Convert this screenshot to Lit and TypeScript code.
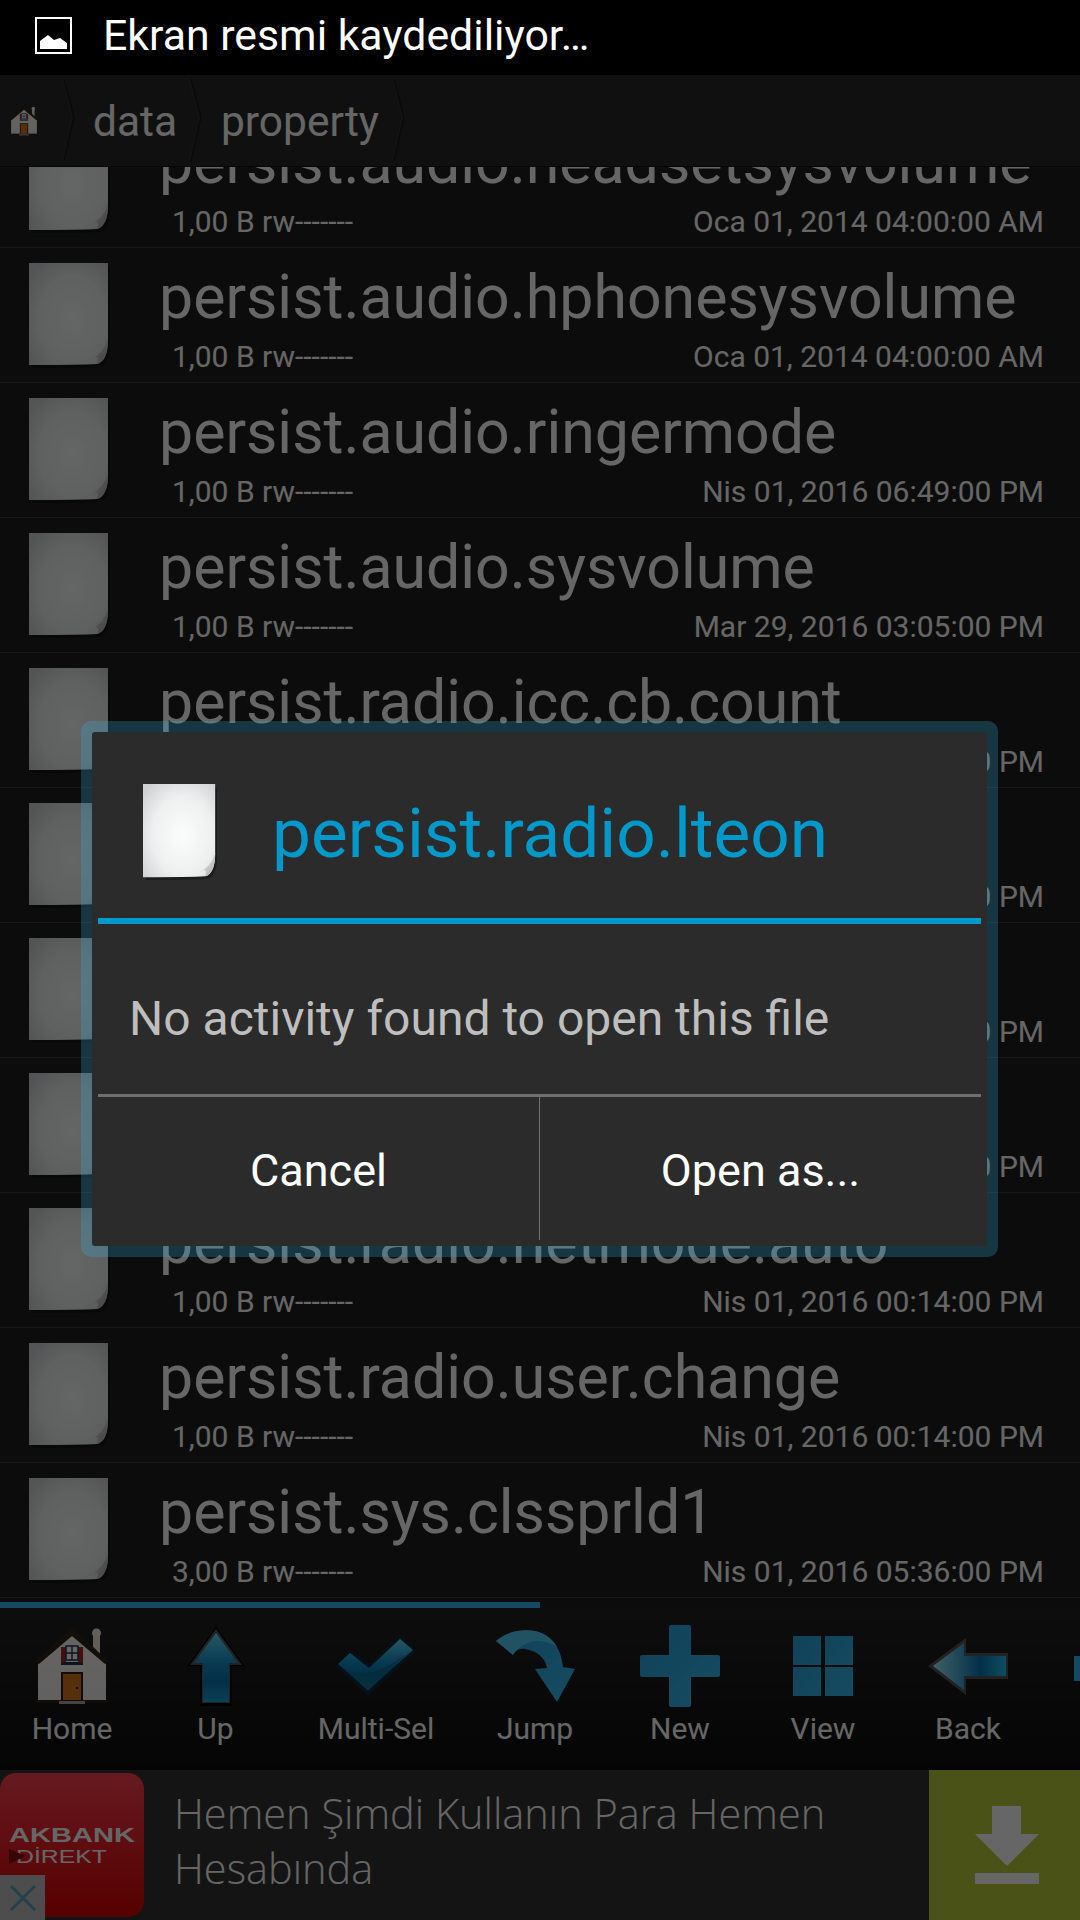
import { LitElement, html, css, svg } from 'lit';
import { customElement } from 'lit/decorators.js';

const LATE = 'Nis 01, 2016 00:14:00 PM';
const rows = [
  ['persist.audio.headsetsysvolume', '1,00 B rw-------', 'Oca 01, 2014 04:00:00 AM'],
  ['persist.audio.hphonesysvolume', '1,00 B rw-------', 'Oca 01, 2014 04:00:00 AM'],
  ['persist.audio.ringermode', '1,00 B rw-------', 'Nis 01, 2016 06:49:00 PM'],
  ['persist.audio.sysvolume', '1,00 B rw-------', 'Mar 29, 2016 03:05:00 PM'],
  ['persist.radio.icc.cb.count', '1,00 B rw-------', LATE],
  ['persist.radio.ia', '1,00 B rw-------', LATE],
  ['persist.radio.lteon', '1,00 B rw-------', LATE],
  ['persist.radio.mode', '1,00 B rw-------', LATE],
  ['persist.radio.netmode.auto', '1,00 B rw-------', LATE],
  ['persist.radio.user.change', '1,00 B rw-------', LATE],
  ['persist.sys.clssprld1', '3,00 B rw-------', 'Nis 01, 2016 05:36:00 PM'],
];

const gradients = html`<svg class="defs" width="0" height="0">
  <defs>
    <radialGradient id="paper" cx="0.55" cy="0.55" r="0.7">
      <stop offset="0" stop-color="#fbfdfd" />
      <stop offset="0.6" stop-color="#eef0f0" />
      <stop offset="1" stop-color="#cfd1d3" />
    </radialGradient>
    <linearGradient id="curl" x1="0" y1="0" x2="1" y2="1">
      <stop offset="0" stop-color="#f4f4f4" />
      <stop offset="1" stop-color="#a9a9a9" />
    </linearGradient>
    <linearGradient id="blueV" x1="0" y1="0" x2="0" y2="1">
      <stop offset="0" stop-color="#60ddff" />
      <stop offset="0.45" stop-color="#1590c8" />
      <stop offset="0.7" stop-color="#0a78b0" />
      <stop offset="1" stop-color="#1a9fd8" />
    </linearGradient>
    <linearGradient id="blueFlat" x1="0" y1="0" x2="1" y2="1">
      <stop offset="0" stop-color="#2aa5dd" />
      <stop offset="1" stop-color="#35bcf0" />
    </linearGradient>
    <linearGradient id="blueH" x1="0" y1="0" x2="1" y2="0">
      <stop offset="0" stop-color="#a0f0ff" />
      <stop offset="0.65" stop-color="#0878b8" />
      <stop offset="1" stop-color="#28c0f0" />
    </linearGradient>
    <linearGradient id="wall" x1="0" y1="0" x2="0" y2="1">
      <stop offset="0" stop-color="#fffcf4" />
      <stop offset="1" stop-color="#f2f2f2" />
    </linearGradient>
  </defs>
</svg>`;

const paperIcon = (w: number, h: number) => html`<svg class="paper" width=${w} height=${h} viewBox="0 0 81 105">
  <path d="M3 4H81V80Q81 101 70 104Q56 105 3 105Z" fill="#000" opacity="0.35" />
  <path d="M0 0H79V76Q79 98 68 101Q52 102 0 102Z" fill="url(#paper)" />
  <path d="M79 76Q79 98 68 101Q72 90 60 97Q74 92 79 76Z" fill="url(#curl)" />
</svg>`;

const houseIcon = (w: number, h: number) => html`<svg width=${w} height=${h} viewBox="0 0 74 80">
  <path d="M58 8h7v24h-7z" fill="#efe9dd" />
  <circle cx="61.5" cy="7" r="4.5" fill="#f4efe6" />
  <path d="M3 34L37 6L71 34V74H3Z" fill="url(#wall)" />
  <path d="M0 36L37 1L74 36L70 38L37 10L4 38Z" fill="#2e2418" />
  <path d="M26 21h5v15h-5zM43 21h5v15h-5z" fill="#b2282a" />
  <path d="M31 20h12v14H31z" fill="#fff" stroke="#20324e" stroke-width="1.4" />
  <path d="M37 20v14M31 27h12" stroke="#20324e" stroke-width="1.4" />
  <path d="M26 36h22v3H26z" fill="#20324e" />
  <path d="M26 46h22v29H26z" fill="#2c2015" />
  <path d="M28 48h18v27H28z" fill="#d7751c" />
  <circle cx="42" cy="62" r="1.2" fill="#222" />
  <path d="M1 74h72v3H1z" fill="#2c2418" />
  <path d="M24 75h26v3H24z" fill="#aaa" />
</svg>`;

const upIcon = svg`<path d="M28 0L56 40H44V80H12V40H0Z" fill="#000" opacity="0.8" />
  <path d="M28 3L54 39H42V77H14V39H2Z" fill="#8a8a8a" opacity="0.6" />
  <path d="M28 7L50 37H41V76H15V37H6Z" fill="url(#blueV)" />`;

const checkIcon = svg`<path d="M0 30L14 14L33 29L64 0L80 15L32 60Z" fill="#0b2c3d" />
  <path d="M2 28L14 17L33 32L64 3L77 14L32 54Z" fill="url(#blueV)" />
  <path d="M4 29Q30 50 74 15L32 55Z" fill="#0d6a94" opacity="0.7" />`;

const jumpIcon = svg`<path d="M1 12C12 2 28 0 40 2C56 6 66 18 68 38L80 40L62 73L40 40L52 39C50 28 42 22 30 20C24 19 20 22 18 26Z" fill="url(#blueFlat)" />
  <path d="M1 12C12 2 28 0 40 2C50 4 58 10 62 18C50 10 30 8 18 26Z" fill="#60ddff" opacity="0.7" />`;

const plusIcon = svg`<path d="M29 2a2 2 0 0 1 2-2h18a2 2 0 0 1 2 2v28h27a2 2 0 0 1 2 2v18a2 2 0 0 1-2 2H51v28a2 2 0 0 1-2 2H31a2 2 0 0 1-2-2V52H2a2 2 0 0 1-2-2V32a2 2 0 0 1 2-2h27Z" fill="url(#blueFlat)" />`;

const viewIcon = svg`<path d="M0 0h28v29H0zM32 0h28v29H32zM0 31h28v29H0zM32 31h28v29H32z" fill="url(#blueFlat)" />`;

const backIcon = svg`<path d="M0 28L38 0V15H80V41H38V57Z" fill="#555" />
  <path d="M5 28L36 5V18H78V38H36V52Z" fill="url(#blueH)" />`;

const tools = [
  { label: 'Home', icon: houseIcon(74, 80) },
  { label: 'Up', icon: html`<svg width="56" height="80" viewBox="0 0 56 80">${upIcon}</svg>` },
  { label: 'Multi-Sel', icon: html`<svg width="80" height="60" viewBox="0 0 80 60">${checkIcon}</svg>` },
  { label: 'Jump', icon: html`<svg width="81" height="75" viewBox="0 0 81 75">${jumpIcon}</svg>` },
  { label: 'New', icon: html`<svg width="80" height="82" viewBox="0 0 80 82">${plusIcon}</svg>` },
  { label: 'View', icon: html`<svg width="60" height="60" viewBox="0 0 60 60">${viewIcon}</svg>` },
  { label: 'Back', icon: html`<svg width="80" height="57" viewBox="0 0 80 57">${backIcon}</svg>` },
];

@customElement('app-root')
export class AppRoot extends LitElement {
  static styles = css`
    :host {
      display: block;
      width: 1080px;
      height: 1920px;
      font-family: 'Roboto', 'Liberation Sans', sans-serif;
    }

    .defs {
      position: absolute;
    }

    .page {
      position: relative;
      display: flex;
      flex-direction: column;
      width: 1080px;
      height: 1920px;
      overflow: hidden;
      background: #1f1f1f;
    }

    .status {
      display: flex;
      align-items: center;
      gap: 31px;
      height: 75px;
      box-sizing: border-box;
      padding: 0 0 5px 35px;
      background: #000;
      color: #fff;
      font-size: 42.8px;
      flex: none;
    }

    .crumbs {
      display: flex;
      align-items: center;
      height: 91px;
      background: #2a2a2a;
      border-bottom: 1px solid #111;
      color: #fff;
      font-size: 42.5px;
      flex: none;
    }

    .crumb {
      display: flex;
      align-items: center;
      height: 100%;
    }

    .crumb-home {
      padding-left: 10px;
      width: 52px;
    }

    .crumb-data {
      margin-left: 17px;
      padding-top: 2px;
      width: 96px;
    }

    .crumb-property {
      margin-left: 18px;
      padding-top: 2px;
      width: 171px;
    }

    .chevron {
      flex: none;
    }

    .list {
      flex: 1;
      min-height: 0;
      overflow: hidden;
    }

    .rows {
      margin-top: -54px;
    }

    .row {
      display: flex;
      height: 135px;
      box-sizing: border-box;
      padding: 15px 36px 0 29px;
      border-bottom: 1px solid #3a3a3a;
      color: #fff;
    }

    .paper {
      flex: none;
    }

    .row-text {
      flex: 1;
      margin-left: 49px;
      min-width: 0;
    }

    .name {
      margin-top: 2px;
      font-size: 60.8px;
      line-height: 66px;
      white-space: nowrap;
    }

    .meta {
      display: flex;
      justify-content: space-between;
      margin-top: 8px;
      padding-left: 13px;
      font-size: 30px;
      line-height: 36px;
    }

    .progress {
      flex: none;
      height: 6px;
      background: #1f1f1f;
    }

    .progress-fill {
      width: 540px;
      height: 100%;
      background: #35bcf0;
    }

    .toolbar {
      flex: none;
      display: grid;
      grid-template-columns: 144px 143px 178px 140px 150px 136px 154px 1fr;
      height: 158px;
      box-sizing: border-box;
      padding-top: 17px;
      background: linear-gradient(#222, #0e0e0e);
      color: #fff;
      font-size: 30px;
    }

    .tool {
      display: flex;
      flex-direction: column;
      align-items: center;
    }

    .tool-icon {
      display: flex;
      align-items: center;
      justify-content: center;
      height: 82px;
    }

    .tool-label {
      margin-top: 4px;
      line-height: 36px;
    }

    .tool-next {
      margin: 31px 0 0 29px;
      width: 10px;
      height: 25px;
      background: #30b8f0;
    }

    .ad {
      position: relative;
      flex: none;
      display: flex;
      height: 154px;
      box-sizing: border-box;
      border-top: 4px solid #0a0a0a;
      background: #343434;
      color: #fff;
    }

    .ad-logo {
      flex: none;
      width: 144px;
      height: 144px;
      margin-top: 3px;
      border-radius: 16px;
      background: linear-gradient(#ff4150, #d70000);
    }

    .ad-text {
      flex: 1;
      margin-left: 30px;
      padding-top: 16px;
      font-family: 'Open Sans', 'Noto Sans', sans-serif;
      font-weight: 300;
      font-size: 41.5px;
      line-height: 55px;
    }

    .ad-install {
      flex: none;
      display: flex;
      align-items: center;
      justify-content: center;
      width: 151px;
      box-sizing: border-box;
      padding-left: 5px;
      background: #bccd3d;
    }

    .ad-close {
      position: absolute;
      left: 0;
      bottom: 0;
      display: flex;
      align-items: center;
      justify-content: center;
      width: 45px;
      height: 45px;
      background: #c4c0c0;
    }

    .dim {
      position: absolute;
      left: 0;
      right: 0;
      top: 75px;
      bottom: 0;
      background: rgba(0, 0, 0, 0.6);
    }

    .dialog {
      position: absolute;
      left: 81px;
      top: 721px;
      box-sizing: border-box;
      width: 917px;
      height: 536px;
      padding: 11px;
      border-radius: 10px;
      background: rgba(51, 181, 229, 0.25);
    }

    .dialog-inner {
      display: flex;
      flex-direction: column;
      height: 100%;
      border-radius: 3px;
      background: #2b2b2b;
    }

    .dialog-head {
      display: flex;
      align-items: center;
      gap: 55px;
      height: 186px;
      box-sizing: border-box;
      padding: 14px 0 0 51px;
      flex: none;
      color: #0099cc;
      font-size: 69.3px;
    }

    .dialog-title {
      margin-top: 2px;
    }

    .rule-blue {
      flex: none;
      height: 6px;
      margin: 0 6px;
      background: #0099cc;
    }

    .dialog-msg {
      flex: 1;
      display: flex;
      align-items: center;
      padding: 18px 0 0 37px;
      color: #bebebe;
      font-size: 48px;
    }

    .rule-grey {
      flex: none;
      height: 3px;
      margin: 0 6px;
      background: #6f6f6f;
    }

    .dialog-buttons {
      flex: none;
      display: grid;
      grid-template-columns: 441px 1fr;
      height: 143px;
      margin: 0 6px 6px;
      color: #fff;
      font-size: 45px;
    }

    .dialog-btn {
      display: flex;
      align-items: center;
      justify-content: center;
      padding-top: 4px;
    }

    .dialog-btn + .dialog-btn {
      border-left: 1px solid #6f6f6f;
    }
  `;

  chevron() {
    return html`<svg class="chevron" width="14" height="91" viewBox="0 0 14 91">
      <path d="M2 4L12 42L2 86" fill="none" stroke="#1a1a1a" stroke-width="1.5" />
      <path d="M0 4L10 42L0 86" fill="none" stroke="#333" stroke-width="1" />
    </svg>`;
  }

  render() {
    return html`
      ${gradients}
      <div class="page">
        <div class="status">
          <svg width="37" height="37" viewBox="0 0 37 37">
            <path d="M1 1h35v35H1z" fill="none" stroke="#fff" stroke-width="2" />
            <path d="M5 32V24L13 18L19 23L25 21L32 26V32Z" fill="#fff" />
          </svg>
          <span>Ekran resmi kaydediliyor…</span>
        </div>

        <div class="crumbs">
          <div class="crumb crumb-home">${houseIcon(28, 32)}</div>
          ${this.chevron()}
          <div class="crumb crumb-data"><span>data</span></div>
          ${this.chevron()}
          <div class="crumb crumb-property"><span>property</span></div>
          ${this.chevron()}
        </div>

        <div class="list">
          <div class="rows">
            ${rows.map(
              ([name, size, date]) => html`<div class="row">
                ${paperIcon(81, 105)}
                <div class="row-text">
                  <div class="name">${name}</div>
                  <div class="meta"><span>${size}</span><span>${date}</span></div>
                </div>
              </div>`
            )}
          </div>
        </div>

        <div class="progress"><div class="progress-fill"></div></div>

        <div class="toolbar">
          ${tools.map(
            (tool) => html`<div class="tool">
              <div class="tool-icon">${tool.icon}</div>
              <div class="tool-label">${tool.label}</div>
            </div>`
          )}
          <div class="tool-next"></div>
        </div>

        <div class="ad">
          <div class="ad-logo">
            <svg width="144" height="144" viewBox="0 0 144 144">
              <text x="9" y="69" font-family="Liberation Sans" font-weight="700" font-size="20" fill="#fff" textLength="126" lengthAdjust="spacingAndGlyphs">AKBANK</text>
              <text x="16" y="90" font-family="Liberation Sans" font-size="19" fill="#fff" textLength="91" lengthAdjust="spacingAndGlyphs">DİREKT</text>
              <path d="M9 76L26 83L9 91Z" fill="#8f0a0a" />
            </svg>
          </div>
          <div class="ad-text">Hemen Şimdi Kullanın Para Hemen Hesabında</div>
          <div class="ad-install">
            <svg width="64" height="78" viewBox="0 0 64 78">
              <path d="M17 0H46V28H64L32 60L0 28H17ZM0 67H64V78H0Z" fill="#fff" />
            </svg>
          </div>
          <div class="ad-close">
            <svg width="30" height="30" viewBox="0 0 30 30">
              <path d="M3 3L27 27M27 3L3 27" stroke="#5aa0be" stroke-width="3" fill="none" />
            </svg>
          </div>
        </div>

        <div class="dim"></div>

        <div class="dialog">
          <div class="dialog-inner">
            <div class="dialog-head">
              ${paperIcon(74, 96)}
              <span class="dialog-title">persist.radio.lteon</span>
            </div>
            <div class="rule-blue"></div>
            <div class="dialog-msg">No activity found to open this file</div>
            <div class="rule-grey"></div>
            <div class="dialog-buttons">
              <div class="dialog-btn">Cancel</div>
              <div class="dialog-btn">Open as...</div>
            </div>
          </div>
        </div>
      </div>
    `;
  }
}
